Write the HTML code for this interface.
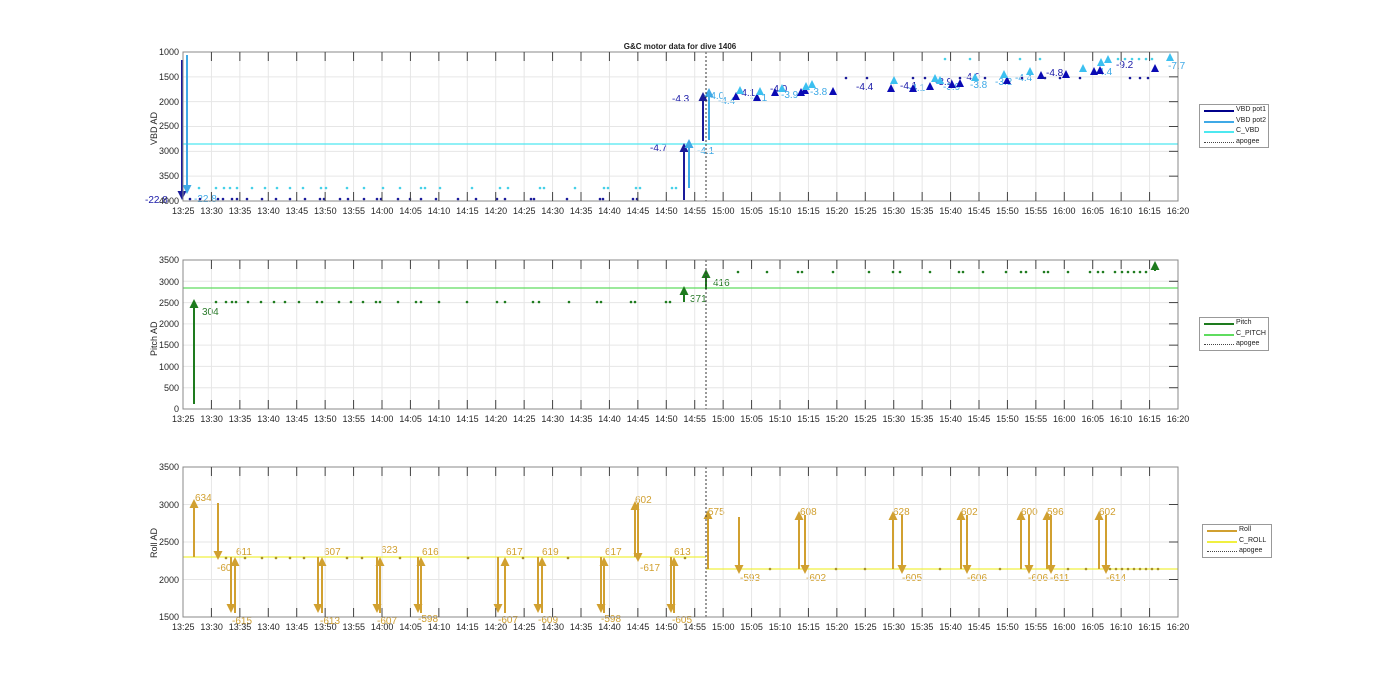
<!DOCTYPE html>
<html><head><meta charset="utf-8"><style>
body{margin:0;width:1400px;height:693px;background:#fff;overflow:hidden;font-family:"Liberation Sans",Arial,sans-serif;position:relative}
svg{position:absolute;left:0;top:0}
.xt{position:absolute;left:169px;width:1024px;display:flex;font-size:9px;color:#262626}
.xt span{width:28.43px;text-align:center;flex:none}
.yl{position:absolute;font-size:9px;color:#262626;text-align:right;width:40px}
.lg{position:absolute;background:#fff;border:1px solid #999;font-size:7px;color:#222;white-space:nowrap}
.lg div{height:10.5px;line-height:10.5px;position:relative;padding-left:36px}
.lg i{position:absolute;left:4px;top:5px;width:30px;height:0;border-top:2px solid}
.ylab{position:absolute;font-size:9px;color:#262626;transform:rotate(-90deg);transform-origin:left top;white-space:nowrap}
</style></head><body>
<svg id="s" width="1400" height="693" font-family="Liberation Sans,Arial,sans-serif">
<text x="680" y="49" font-size="8" font-weight="bold" text-anchor="middle" fill="#222">G&amp;C motor data for dive 1406</text>
<g font-size="10" fill="#1a1aa8">
<text x="145" y="203">-22.8</text><text x="650" y="151">-4.7</text><text x="672" y="102">-4.3</text>
<text x="856" y="90">-4.4</text><text x="900" y="89">-4.1</text><text x="1046" y="76">-4.8</text><text x="1116" y="68">-9.2</text>
<text x="770" y="92">-4.0</text><text x="935" y="85">-3.9</text><text x="963" y="80">-4.0</text><text x="738" y="96">-4.1</text>
</g>
<g font-size="10" fill="#3fa9e6">
<text x="194" y="202">-22.8</text><text x="697" y="154">-4.1</text><text x="707" y="99">-4.0</text><text x="718" y="104">-4.4</text>
<text x="750" y="101">-4.1</text><text x="781" y="98">-3.9</text><text x="810" y="95">-3.8</text><text x="908" y="91">-4.1</text>
<text x="943" y="90">-3.9</text><text x="970" y="88">-3.8</text><text x="995" y="85">-3.2</text><text x="1015" y="81">-4.4</text>
<text x="1095" y="75">-4.4</text><text x="1168" y="69">-7.7</text>
</g>
<g font-size="10" fill="#2a7a2a"><text x="202" y="315">304</text><text x="690" y="302">371</text><text x="713" y="286">416</text></g>
<g font-size="10" fill="#d1a030">
<text x="195" y="501">634</text><text x="217" y="571">-60</text><text x="236" y="555">611</text><text x="232" y="624">-615</text>
<text x="324" y="555">607</text><text x="320" y="624">-613</text><text x="381" y="553">623</text><text x="377" y="624">-607</text>
<text x="422" y="555">616</text><text x="418" y="622">-598</text><text x="506" y="555">617</text><text x="498" y="623">-607</text>
<text x="542" y="555">619</text><text x="538" y="623">-609</text><text x="605" y="555">617</text><text x="601" y="622">-598</text>
<text x="635" y="503">602</text><text x="640" y="571">-617</text><text x="674" y="555">613</text><text x="672" y="623">-605</text>
<text x="708" y="515">575</text><text x="740" y="581">-593</text><text x="800" y="515">608</text><text x="806" y="581">-602</text>
<text x="893" y="515">628</text><text x="902" y="581">-605</text><text x="961" y="515">602</text><text x="967" y="581">-606</text>
<text x="1021" y="515">600</text><text x="1028" y="581">-606</text><text x="1047" y="515">596</text><text x="1050" y="581">-611</text>
<text x="1099" y="515">602</text><text x="1106" y="581">-614</text>
</g>
</svg>
<div class="xt" style="top:206px"><span>13:25</span><span>13:30</span><span>13:35</span><span>13:40</span><span>13:45</span><span>13:50</span><span>13:55</span><span>14:00</span><span>14:05</span><span>14:10</span><span>14:15</span><span>14:20</span><span>14:25</span><span>14:30</span><span>14:35</span><span>14:40</span><span>14:45</span><span>14:50</span><span>14:55</span><span>15:00</span><span>15:05</span><span>15:10</span><span>15:15</span><span>15:20</span><span>15:25</span><span>15:30</span><span>15:35</span><span>15:40</span><span>15:45</span><span>15:50</span><span>15:55</span><span>16:00</span><span>16:05</span><span>16:10</span><span>16:15</span><span>16:20</span></div>
<div class="xt" style="top:414px"><span>13:25</span><span>13:30</span><span>13:35</span><span>13:40</span><span>13:45</span><span>13:50</span><span>13:55</span><span>14:00</span><span>14:05</span><span>14:10</span><span>14:15</span><span>14:20</span><span>14:25</span><span>14:30</span><span>14:35</span><span>14:40</span><span>14:45</span><span>14:50</span><span>14:55</span><span>15:00</span><span>15:05</span><span>15:10</span><span>15:15</span><span>15:20</span><span>15:25</span><span>15:30</span><span>15:35</span><span>15:40</span><span>15:45</span><span>15:50</span><span>15:55</span><span>16:00</span><span>16:05</span><span>16:10</span><span>16:15</span><span>16:20</span></div>
<div class="xt" style="top:622px"><span>13:25</span><span>13:30</span><span>13:35</span><span>13:40</span><span>13:45</span><span>13:50</span><span>13:55</span><span>14:00</span><span>14:05</span><span>14:10</span><span>14:15</span><span>14:20</span><span>14:25</span><span>14:30</span><span>14:35</span><span>14:40</span><span>14:45</span><span>14:50</span><span>14:55</span><span>15:00</span><span>15:05</span><span>15:10</span><span>15:15</span><span>15:20</span><span>15:25</span><span>15:30</span><span>15:35</span><span>15:40</span><span>15:45</span><span>15:50</span><span>15:55</span><span>16:00</span><span>16:05</span><span>16:10</span><span>16:15</span><span>16:20</span></div>
<div class="yl" style="left:139px;top:47px">1000</div><div class="yl" style="left:139px;top:72px">1500</div><div class="yl" style="left:139px;top:97px">2000</div><div class="yl" style="left:139px;top:121px">2500</div><div class="yl" style="left:139px;top:146px">3000</div><div class="yl" style="left:139px;top:171px">3500</div><div class="yl" style="left:139px;top:196px">4000</div>
<div class="yl" style="left:139px;top:255px">3500</div><div class="yl" style="left:139px;top:277px">3000</div><div class="yl" style="left:139px;top:298px">2500</div><div class="yl" style="left:139px;top:319px">2000</div><div class="yl" style="left:139px;top:340px">1500</div><div class="yl" style="left:139px;top:362px">1000</div><div class="yl" style="left:139px;top:383px">500</div><div class="yl" style="left:139px;top:404px">0</div>
<div class="yl" style="left:139px;top:462px">3500</div><div class="yl" style="left:139px;top:500px">3000</div><div class="yl" style="left:139px;top:537px">2500</div><div class="yl" style="left:139px;top:575px">2000</div><div class="yl" style="left:139px;top:612px">1500</div>
<div class="ylab" style="left:149px;top:145px">VBD AD</div>
<div class="ylab" style="left:149px;top:356px">Pitch AD</div>
<div class="ylab" style="left:149px;top:558px">Roll AD</div>
<div class="lg" style="left:1199px;top:104px;width:68px"><div><i style="border-color:#00008b"></i>VBD pot1</div><div><i style="border-color:#3fa9e6"></i>VBD pot2</div><div><i style="border-color:#4de8f0"></i>C_VBD</div><div><i style="border-top:1px dotted #444"></i>apogee</div></div>
<div class="lg" style="left:1199px;top:317px;width:68px"><div><i style="border-color:#1e7b1e"></i>Pitch</div><div><i style="border-color:#5fdc5f"></i>C_PITCH</div><div><i style="border-top:1px dotted #444"></i>apogee</div></div>
<div class="lg" style="left:1202px;top:524px;width:68px"><div><i style="border-color:#d1a030"></i>Roll</div><div><i style="border-color:#f0f040"></i>C_ROLL</div><div><i style="border-top:1px dotted #444"></i>apogee</div></div>
<script>
var s=document.getElementById('s'),N='http://www.w3.org/2000/svg';
function add(t,a){var e=document.createElementNS(N,t);for(var k in a)e.setAttribute(k,a[k]);s.appendChild(e);return e;}
var X0=183,X1=1178,dx=(X1-X0)/35;
var axes=[[52,201,7],[260,409,8],[467,617,5]];
axes.forEach(function(a){
 for(var i=1;i<35;i++){var x=X0+i*dx;add('line',{x1:x,x2:x,y1:a[0],y2:a[1],stroke:'#e6e6e6','stroke-width':1});}
 for(var j=1;j<a[2]-1;j++){var y=a[0]+j*(a[1]-a[0])/(a[2]-1);add('line',{x1:X0,x2:X1,y1:y,y2:y,stroke:'#e6e6e6'});}
});
function line(x1,y1,x2,y2,c,w,d){var o={x1:x1,y1:y1,x2:x2,y2:y2,stroke:c,'stroke-width':w||1};if(d)o['stroke-dasharray']=d;add('line',o);}
function tri(x,y,up,c,sz){sz=sz||4;var h=sz*2;add('polygon',{points:up?(x-sz)+','+(y+h)+' '+(x+sz)+','+(y+h)+' '+x+','+y:(x-sz)+','+(y-h)+' '+(x+sz)+','+(y-h)+' '+x+','+y,fill:c});}
function arr(x,y1,y2,c){var up=y2<y1;line(x,y1,x,up?y2+6:y2-6,c,2);tri(x,y2,up,c,4.5);}
function dot(x,y,c){add('circle',{cx:x,cy:y,r:1.3,fill:c});}
line(X0,144,X1,144,'#4de8f0',1.2);
var DB='#1a1a9a',LB='#3fa9e6',CY='#45d0e8';
arr(182,60,200,DB);arr(187,55,194,LB);
[190,200,218,223,232,237,247,262,276,290,305,320,324,340,348,364,377,381,398,410,421,436,458,476,497,505,531,534,567,600,603,633,637].forEach(function(x){dot(x,199,DB);});
[199,216,224,230,237,252,265,277,290,303,321,326,347,364,383,400,421,425,440,472,500,508,540,544,575,604,608,636,640,672,676].forEach(function(x){dot(x,188,CY);});
arr(684,200,143,DB);arr(689,188,139,LB);arr(703,141,92,DB);arr(709,140,88,LB);
[[736,92],[757,93],[775,88],[801,88],[805,86],[833,87],[891,84],[913,84],[930,82],[952,80],[960,79],[1007,76],[1041,71],[1066,70],[1094,67],[1100,66],[1155,64]].forEach(function(p){tri(p[0],p[1],1,'#0a0ab4',4);});
[[740,86],[760,87],[782,84],[806,82],[812,80],[894,76],[935,74],[940,76],[975,73],[1004,70],[1030,67],[1083,64],[1101,58],[1108,55],[1170,53]].forEach(function(p){tri(p[0],p[1],1,'#3cc0f0',4);});
[846,867,913,925,960,985,1022,1045,1060,1080,1130,1140,1148].forEach(function(x){dot(x,78,DB);});
[1118,1125,1132,1139,1146,1152,1040,1020,970,945].forEach(function(x){dot(x,59,CY);});
var G='#1e7b1e';
line(X0,288,X1,288,'#5fdc5f',1.3);
arr(194,404,299,G);
[216,226,232,236,248,261,274,285,299,317,322,339,351,363,376,380,398,416,421,439,467,497,505,533,539,569,597,601,631,635,666,670].forEach(function(x){dot(x,302,G);});
arr(684,302,286,G);arr(706,289,269,G);
[738,767,798,802,833,869,893,900,930,959,963,983,1006,1021,1026,1044,1048,1068,1090,1098,1103,1115,1122,1128,1134,1140,1146].forEach(function(x){dot(x,272,G);});
arr(1155,271,261,G);
var R='#d1a030';
line(X0,557,706,557,'#f0f040',1.3);line(706,569,X1,569,'#f0f040',1.3);
arr(194,557,499,R);arr(218,503,560,R);
[[231,235],[318,322],[377,380],[418,421],[498,505],[538,542],[601,604],[671,674]].forEach(function(p){arr(p[0],557,613,R);arr(p[1],613,557,R);});
arr(635,557,501,R);arr(638,503,562,R);
arr(708,569,510,R);arr(739,517,574,R);
[[799,805],[893,902],[961,967],[1021,1029],[1047,1051],[1099,1106]].forEach(function(p){arr(p[0],569,511,R);arr(p[1],515,574,R);});
[226,245,262,276,290,304,347,362,400,468,523,568,685].forEach(function(x){dot(x,558,'#a8902a');});
[770,836,865,940,1000,1068,1086,1110,1116,1122,1128,1134,1140,1146,1152,1158].forEach(function(x){dot(x,569,'#a8902a');});
axes.forEach(function(a){
 line(706,a[0],706,a[1],'#333',1,'2,2');
 add('rect',{x:X0,y:a[0],width:X1-X0,height:a[1]-a[0],fill:'none',stroke:'#888'});
 for(var i=1;i<35;i++){var x=X0+i*dx;line(x,a[1],x,a[1]-9,'#444');line(x,a[0],x,a[0]+9,'#444');}
 for(var j=1;j<a[2]-1;j++){var y=a[0]+j*(a[1]-a[0])/(a[2]-1);line(X1,y,X1-9,y,'#444');}
});
</script>
</body></html>
